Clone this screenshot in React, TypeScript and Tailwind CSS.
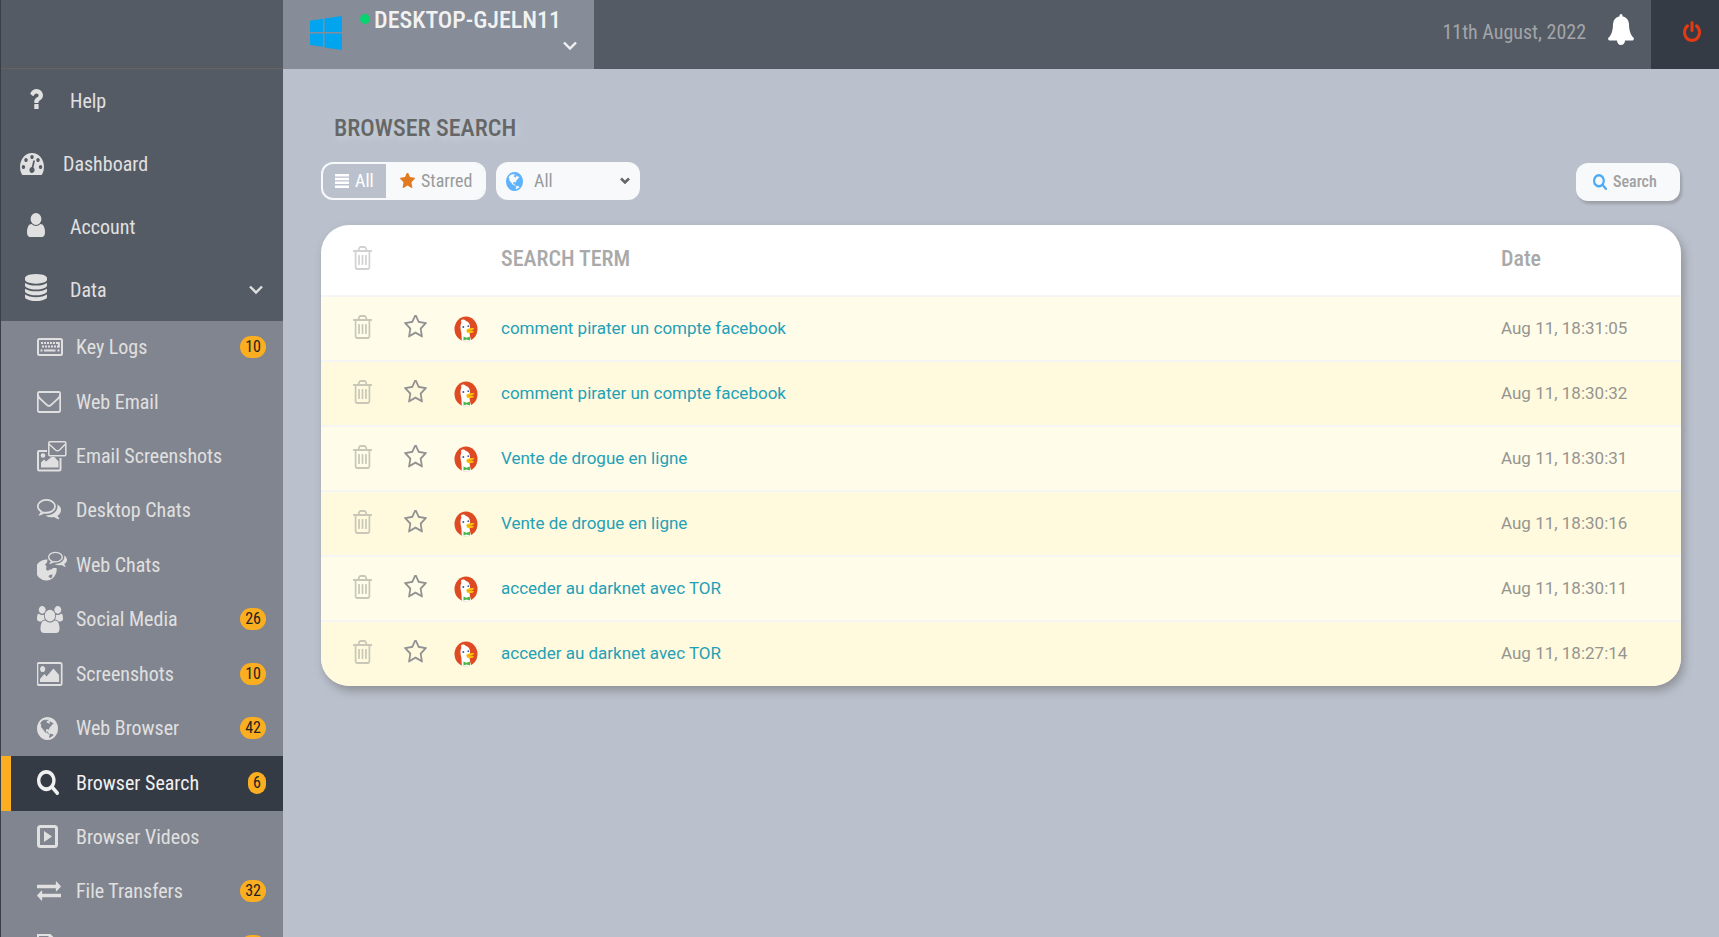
import type { ReactNode } from "react";

const TRASH =
  "M704 736v576q0 14-9 23t-23 9h-64q-14 0-23-9t-9-23v-576q0-14 9-23t23-9h64q14 0 23 9t9 23zm256 0v576q0 14-9 23t-23 9h-64q-14 0-23-9t-9-23v-576q0-14 9-23t23-9h64q14 0 23 9t9 23zm256 0v576q0 14-9 23t-23 9h-64q-14 0-23-9t-9-23v-576q0-14 9-23t23-9h64q14 0 23 9t9 23zm128 724v-948h-896v948q0 22 7 40.5t14.5 27 10.5 8.5h832q3 0 10.5-8.5t14.5-27 7-40.5zm-672-1076h448l-48-117q-7-9-17-11h-317q-10 2-17 11zm928 32v64q0 14-9 23t-23 9h-96v948q0 83-47 143.5t-113 60.5h-832q-66 0-113-58.5t-47-141.5v-952h-96q-14 0-23-9t-9-23v-64q0-14 9-23t23-9h309l70-167q15-37 54-63t79-26h320q40 0 79 26t54 63l70 167h309q14 0 23 9t9 23z";
const QUESTION =
  "M1088 1256v240q0 16-12 28t-28 12h-240q-16 0-28-12t-12-28v-240q0-16 12-28t28-12h240q16 0 28 12t12 28zm316-600q0 54-15.5 101t-35 76.5-55 59.5-57.5 43.5-61 35.5q-41 23-68.5 65t-27.5 67q0 17-12 32.5t-28 15.5h-240q-15 0-25.5-18.5t-10.5-37.5v-45q0-83 65-156.5t143-108.5q59-27 84-56t25-76q0-42-46.5-74t-107.5-32q-65 0-108 29-35 25-107 115-13 16-31 16-12 0-25-8l-164-125q-13-10-15.5-25t5.5-28q160-266 464-266 80 0 161 31t146 83 106 127.5 41 158.5z";
const DASHBOARD =
  "M384 1152q0-53-37.5-90.5t-90.5-37.5-90.5 37.5-37.5 90.5 37.5 90.5 90.5 37.5 90.5-37.5 37.5-90.5zm192-448q0-53-37.5-90.5t-90.5-37.5-90.5 37.5-37.5 90.5 37.5 90.5 90.5 37.5 90.5-37.5 37.5-90.5zm428 481l101-382q6-26-7.5-48.5t-38.5-29.5-48 6.5-30 39.5l-101 382q-60 5-107 43.5t-63 98.5q-20 77 20 146t117 89 146-20 89-117q16-60-6-117t-72-91zm660-33q0-53-37.5-90.5t-90.5-37.5-90.5 37.5-37.5 90.5 37.5 90.5 90.5 37.5 90.5-37.5 37.5-90.5zm-640-640q0-53-37.5-90.5t-90.5-37.5-90.5 37.5-37.5 90.5 37.5 90.5 90.5 37.5 90.5-37.5 37.5-90.5zm448 192q0-53-37.5-90.5t-90.5-37.5-90.5 37.5-37.5 90.5 37.5 90.5 90.5 37.5 90.5-37.5 37.5-90.5zm320 448q0 261-141 483-19 29-54 29h-1402q-35 0-54-29-141-221-141-483 0-182 71-348t191-286 286-191 348-71 348 71 286 191 191 286 71 348z";
const USER =
  "M1536 1399q0 109-62.5 187t-150.5 78h-854q-88 0-150.5-78t-62.5-187q0-85 8.5-160.5t31.5-152 58.5-131 94-89 134.5-34.5q131 128 313 128t313-128q76 0 134.5 34.5t94 89 58.5 131 31.5 152 8.5 160.5zm-256-887q0 159-112.5 271.5t-271.5 112.5-271.5-112.5-112.5-271.5 112.5-271.5 271.5-112.5 271.5 112.5 112.5 271.5z";
const DATABASE =
  "M896 768q237 0 443-43t325-127v170q0 69-103 128t-280 93.5-385 34.5-385-34.5-280-93.5-103-128v-170q119 84 325 127t443 43zm0 768q237 0 443-43t325-127v170q0 69-103 128t-280 93.5-385 34.5-385-34.5-280-93.5-103-128v-170q119 84 325 127t443 43zm0-384q237 0 443-43t325-127v170q0 69-103 128t-280 93.5-385 34.5-385-34.5-280-93.5-103-128v-170q119 84 325 127t443 43zm0-1152q208 0 385 34.5t280 93.5 103 128v128q0 69-103 128t-280 93.5-385 34.5-385-34.5-280-93.5-103-128v-128q0-69 103-128t280-93.5 385-34.5z";
const ENVELOPE =
  "M1664 1504v-768q-32 36-69 66-268 206-426 338-51 43-83 67t-86.5 48.5-102.5 24.5h-2q-48 0-102.5-24.5t-86.5-48.5-83-67q-158-132-426-338-37-30-69-66v768q0 13 9.5 22.5t22.5 9.5h1472q13 0 22.5-9.5t9.5-22.5zm0-1051v-24.5l-.5-13-3-12.5-5.5-9-9-7.5-14-2.5h-1472q-13 0-22.5 9.5t-9.5 22.5q0 168 147 284 193 152 401 317 6 5 35 29.5t46 37.5 44.5 31.5 50.5 27.5 43 9h2q20 0 43-9t50.5-27.5 44.5-31.5 46-37.5 35-29.5q208-165 401-317 54-43 100.5-115.5t46.5-131.5zm128-37v1088q0 66-47 113t-113 47h-1472q-66 0-113-47t-47-113v-1088q0-66 47-113t113-47h1472q66 0 113 47t47 113z";
const PICTURE =
  "M576 576q0 80-56 136t-136 56-136-56-56-136 56-136 136-56 136 56 56 136zm1024 384v448h-1408v-192l320-320 160 160 512-512zm96-704h-1600q-13 0-22.5 9.5t-9.5 22.5v1216q0 13 9.5 22.5t22.5 9.5h1600q13 0 22.5-9.5t9.5-22.5v-1216q0-13-9.5-22.5t-22.5-9.5zm160 32v1216q0 66-47 113t-113 47h-1600q-66 0-113-47t-47-113v-1216q0-66 47-113t113-47h1600q66 0 113 47t47 113z";
const COMMENTS =
  "M704 384q-153 0-286 52t-211.5 141-78.5 191q0 82 53 158t149 132l97 56-35 84q34-20 62-39l44-31 53 10q78 14 153 14 153 0 286-52t211.5-141 78.5-191-78.5-191-211.5-141-286-52zm0-128q191 0 353.5 68.5t256.5 186.5 94 257-94 257-256.5 186.5-353.5 68.5q-86 0-176-16-124 88-278 128-36 9-86 16h-3q-11 0-20.5-8t-11.5-21q-1-3-1-6.5t.5-6.5 2-6l2.5-5 3.5-5.5 4-5 4.5-5 4-4.5q5-6 23-25t26-29.5 22.5-29 25-38.5 20.5-44q-124-72-195-177t-71-224q0-139 94-257t256.5-186.5 353.5-68.5zm822 1169q10 24 20.5 44t25 38.5 22.5 29 26 29.5 23 25q1 1 4 4.5t4.5 5 4 5 3.5 5.5l2.5 5 2 6 .5 6.5-1 6.5q-3 14-13 22t-22 7q-50-7-86-16-154-40-278-128-90 16-176 16-271 0-472-132 58 4 88 4 161 0 309-45t264-129q125-92 192-212t67-254q0-77-23-152 129 71 204 178t75 230q0 120-71 224.5t-195 176.5z";
const USERS =
  "M593 896q-162 5-265 128h-134q-82 0-138-40.5t-56-118.5q0-353 124-353 6 0 43.5 21t97.5 42.5 119 21.5q67 0 133-23-5 37-5 66 0 139 81 256zm1071 637q0 120-73 189.5t-194 69.5h-874q-121 0-194-69.5t-73-189.5q0-53 3.5-103.5t14-109 26.5-108.5 43-97.5 62-81 85.5-53.5 111.5-20q10 0 43 21.5t73 48 107 48 135 21.5 135-21.5 107-48 73-48 43-21.5q61 0 111.5 20t85.5 53.5 62 81 43 97.5 26.5 108.5 14 109 3.5 103.5zm-1024-1277q0 106-75 181t-181 75-181-75-75-181 75-181 181-75 181 75 75 181zm704 384q0 159-112.5 271.5t-271.5 112.5-271.5-112.5-112.5-271.5 112.5-271.5 271.5-112.5 271.5 112.5 112.5 271.5zm576 225q0 78-56 118.5t-138 40.5h-134q-103-123-265-128 81-117 81-256 0-29-5-66 66 23 133 23 59 0 119-21.5t97.5-42.5 43.5-21q124 0 124 353zm-128-609q0 106-75 181t-181 75-181-75-75-181 75-181 181-75 181 75 75 181z";
const GLOBE =
  "M896 128q209 0 385.5 103t279.5 279.5 103 385.5-103 385.5-279.5 279.5-385.5 103-385.5-103-279.5-279.5-103-385.5 103-385.5 279.5-279.5 385.5-103zm274 521q-2 1-9.5 9.5t-13.5 9.5q2 0 4.5-5t5-11 3.5-7q6-7 22-15 14-6 52-12 34-8 51 11-2-2 9.5-13t14.5-12q3-2 15-4.5t15-7.5l2-22q-12 1-17.5-7t-6.5-21q0 2-6 8 0-7-4.5-8t-11.5 1-9 1q-10-3-15-7.5t-8-16.5-4-15q-2-5-9.5-11t-9.5-10q-1-2-2.5-5.5t-3-6.5-4-5.5-5.5-2.5-7 5-7.5 10-4.5 5q-3-2-6-1.5t-4.5 1-4.5 3-5 3.5q-3 2-8.5 3t-8.5 2q15-5-1-11-10-4-16-3 9-4 7.5-12t-8.5-14h5q-1-4-8.5-8.5t-17.5-8.5-13-6q-8-5-34-9.5t-33-.5q-5 6-4.5 10.5t4 14 3.5 12.5q1 6-5.5 13t-6.5 12q0 7 14 15.5t10 21.5q-3 8-16 16t-16 12q-5 8-1.5 18.5t10.5 16.5q2 2 1.5 4t-3.5 4.5-5.5 4-6.5 3.5l-3 2q-11 5-20.5-6t-13.5-26q-7-25-16-30-23-8-29 1-5-13-41-26-25-9-58-4 6-1 0-15-7-15-19-12 3-6 4-17.5t1-13.5q3-13 12-23 1-1 7-8.5t9.5-13.5.5-6q35 4 50-11 5-5 11.5-17t10.5-17q9-6 14-5.5t14.5 5.5 14.5 5q14 1 15.5-11t-7.5-20q12 1 3-17-4-7-8-9-12-4-27 5-8 4 2 8-1-1-9.5 10.5t-16.5 17.5-16-5q-1-1-5.5-13.5t-9.5-13.5q-8 0-16 15 3-8-11-15t-24-8q19-12-8-27-7-4-20.5-5t-19.5 4q-5 7-5.5 11.5t5 8 10.5 5.5 11.5 4 8.5 3q14 10 8 14-2 1-8.5 3.5t-11.5 4.5-6 4q-3 4 0 14t-2 14q-5-5-9-17.5t-7-16.5q7 9-25 6l-10-1q-4 0-16 2t-20.5 1-13.5-8q-4-8 0-20 1-4 4-2-4-3-11-9.5t-10-8.5q-46 15-94 41 6 1 12-1 5-2 13-6.5t10-5.5q34-14 42-7l5-5q14 16 20 25-7-4-30-1-20 6-22 12 7 12 5 18-4-3-11.5-10t-14.5-11-15-5q-16 0-22 1-146 80-235 222 7 7 12 8 4 1 5 9t2.5 11 11.5-3q9 8 3 19 1-1 44 27 19 17 21 21 3 11-10 18-1-2-9-9t-9-4q-3 5 .5 18.5t10.5 12.5q-7 0-9.5 16t-2.5 35.5-1 23.5l2 1q-3 12 5.5 34.5t21.5 19.5q-13 3 20 43 6 8 8 9 3 2 12 7.5t15 10 10 10.5q4 5 10 22.5t14 23.5q-2 6 9.5 20t10.5 23q-1 0-2.5 1t-2.5 1q3 7 15.5 14t15.5 13q1 3 2 10t3 11 8 2q2-20-24-62-15-25-17-29-3-5-5.5-15.5t-4.5-14.5q2 0 6 1.5t8.5 3.5 7.5 4 2 3q-3 7 2 17.5t12 18.5 17 19 12 13q6 6 14 19.5t0 13.5q9 0 20 10.5t17 19.5q5 8 8 26t5 24q2 7 8.5 13.5t12.5 9.5l16 8 13 7q5 2 18.5 10.5t21.5 11.5q10 4 16 4t14.5-2.5 13.5-3.5q15-2 29 15t21 21q36 19 55 11-2 1 .5 7.5t8 15.5 9 14.5 5.5 8.5q5 6 18 15t18 15q6-4 7-9-3 8 7 20t18 10q14-3 14-32-31 15-49-18 0-1-2.5-5.5t-4-8.5-2.5-8.5 0-7.5 5-3q9 0 10-3.5t-2-12.5-4-13q-1-8-11-20t-12-15q-5 9-16 8t-16-9q0 1-1.5 5.5t-1.5 6.5q-13 0-15-1 1-3 2.5-17.5t3.5-22.5q1-4 5.5-12t7.5-14.5 4-12.5-4.5-9.5-17.5-2.5q-19 1-26 20-1 3-3 10.5t-5 11.5-9 7q-7 3-24 2t-24-5q-13-8-22.5-29t-9.5-37q0-10 2.5-26.5t3-25-5.5-24.5q3-2 9-9.5t10-10.5q2-1 4.5-1.5t4.5 0 4-1.5 3-6q-1-1-4-3-3-3-4-3 7 3 28.5-1.5t27.5 1.5q15 11 22-2 0-1-2.5-9.5t-.5-13.5q5 27 29 9 3 3 15.5 5t17.5 5q3 2 7 5.5t5.5 4.5 5-.5 8.5-6.5q10 14 12 24 11 40 19 44 7 3 11 2t4.5-9.5 0-14-1.5-12.5l-1-8v-18l-1-8q-15-3-18.5-12t1.5-18.5 15-18.5q1-1 8-3.5t15.5-6.5 12.5-8q21-19 15-35 7 0 11-9-1 0-5-3t-7.5-5-4.5-2q9-5 2-16 5-3 7.5-11t7.5-10q9 12 21 2 8-8 1-16 5-7 20.5-10.5t18.5-9.5q7 2 8-2t1-12 3-12q4-5 15-9t13-5l17-11q3-4 0-4 18 2 31-11 10-11-6-20 3-6-3-9.5t-15-5.5q3-1 11.5-.5t10.5-1.5q15-10-7-16-17-5-43 12zm-163 877q206-36 351-189-3-3-12.5-4.5t-12.5-3.5q-18-7-24-8 1-7-2.5-13t-8-9-12.5-8-11-7q-2-2-7-6t-7-5.5-7.5-4.5-8.5-2-10 1l-3 1q-3 1-5.5 2.5t-5.5 3-4 3 0 2.5q-21-17-36-22-5-1-11-5.5t-10.5-7-10-1.5-11.5 7q-5 5-6 15t-2 13q-7-5 0-17.5t2-18.5q-3-6-10.5-4.5t-12 4.5-11.5 8.5-9 6.5-8.5 5.5-8.5 7.5q-3 4-6 12t-5 11q-2-4-11.5-6.5t-9.5-5.5q2 10 4 35t5 38q7 31-12 48-27 25-29 40-4 22 12 26 0 7-8 20.5t-7 21.5q0 6 2 16z";
const SEARCH =
  "M1216 832q0-185-131.5-316.5t-316.5-131.5-316.5 131.5-131.5 316.5 131.5 316.5 316.5 131.5 316.5-131.5 131.5-316.5zm512 832q0 52-38 90t-90 38q-54 0-90-38l-343-342q-179 124-399 124-143 0-273.5-55.5t-225-150-150-225-55.5-273.5 55.5-273.5 150-225 225-150 273.5-55.5 273.5 55.5 225 150 150 225 55.5 273.5q0 220-124 399l343 343q37 37 37 90z";
const EXCHANGE =
  "M1792 1184v192q0 13-9.5 22.5t-22.5 9.5h-1376v192q0 13-9.5 22.5t-22.5 9.5q-12 0-24-10l-319-320q-9-9-9-22 0-14 9-23l320-320q9-9 23-9 13 0 22.5 9.5t9.5 22.5v192h1376q13 0 22.5 9.5t9.5 22.5zm0-544q0 14-9 23l-320 320q-9 9-23 9-13 0-22.5-9.5t-9.5-22.5v-192h-1376q-13 0-22.5-9.5t-9.5-22.5v-192q0-13 9.5-22.5t22.5-9.5h1376v-192q0-14 9-23t23-9q12 0 24 10l319 319q9 9 9 23z";
const BELL =
  "M1728 1408q0 52-38 90t-90 38h-448q0 106-75 181t-181 75-181-75-75-181h-448q-52 0-90-38t-38-90q50-42 91-88t85-119.5 74.5-158.5 50-206 19.5-260q0-152 117-282.5t307-158.5q-8-19-8-39 0-40 28-68t68-28 68 28 28 68q0 20-8 39 190 28 307 158.5t117 282.5q0 139 19.5 260t50 206 74.5 158.5 85 119.5 91 88z";
const POWER =
  "M1664 896q0 156-61 298t-164 245-245 164-298 61-298-61-245-164-164-245-61-298q0-182 80.5-343t226.5-270q43-32 95.5-25t83.5 50q32 42 24.5 94.5t-49.5 84.5q-98 74-151.5 181t-53.5 228q0 104 40.5 198.5t109.5 163.5 163.5 109.5 198.5 40.5 198.5-40.5 163.5-109.5 109.5-163.5 40.5-198.5q0-121-53.5-228t-151.5-181q-42-32-49.5-84.5t24.5-94.5q31-43 84-50t95 25q146 109 226.5 270t80.5 343zm-640-768v640q0 52-38 90t-90 38-90-38-38-90v-640q0-52 38-90t90-38 90 38 38 90z";
const STAR =
  "M1728 647q0 22-26 48l-363 354 86 500q1 7 1 20 0 21-10.5 35.5t-30.5 14.5q-19 0-40-12l-449-236-449 236q-22 12-40 12-21 0-31.5-14.5t-10.5-35.5q0-6 2-20l86-500-364-354q-25-27-25-48 0-37 56-46l502-73 225-455q19-41 49-41t49 41l225 455 502 73q56 9 56 46z";
const STAR_OUTLINE =
  "M1201 1004l306-297-422-62-189-382-189 382-422 62 306 297-73 421 378-199 377 199zm527-357q0 22-26 48l-363 354 86 500q1 7 1 20 0 50-41 50-19 0-40-12l-449-236-449 236q-22 12-40 12-21 0-31.5-14.5t-10.5-35.5q0-6 2-20l86-500-364-354q-25-27-25-48 0-37 56-46l502-73 225-455q19-41 49-41t49 41l225 455 502 73q56 9 56 46z";

type GlyphProps = { d: string; className: string; box?: string };

function Glyph({ d, className, box = "0 0 1792 1792" }: GlyphProps) {
  return (
    <svg
      viewBox={box}
      preserveAspectRatio="none"
      fill="currentColor"
      aria-hidden="true"
      className={`shrink-0 ${className}`}
    >
      <path d={d} />
    </svg>
  );
}

function Keyboard() {
  const keys = [5, 8, 11, 14, 17, 20];
  return (
    <svg viewBox="0 0 26 18" className="h-[18px] w-[26px]" fill="currentColor" aria-hidden="true">
      <rect x="1" y="1" width="24" height="16" rx="1.5" fill="none" stroke="currentColor" strokeWidth="2" />
      {keys.map((x) => (
        <g key={x}>
          <rect x={x - 1} y="4" width="2" height="2" />
          <rect x={x} y="7.5" width="2" height="2" />
        </g>
      ))}
      <rect x="3.5" y="11.5" width="2" height="2" />
      <rect x="7" y="11.5" width="11.5" height="2" />
      <rect x="20.5" y="11.5" width="2" height="2" />
      <path d="M21 4h1.8v5.500h-2.500v-1.500h.7z" />
    </svg>
  );
}

function EmailScreenshots() {
  return (
    <svg viewBox="0 0 30 32" className="h-8 w-[30px]" fill="currentColor" aria-hidden="true">
      <path
        d="M10 11H2.200Q1 11 1 12.200V29Q1 30.500 2.200 30.500H22Q23.500 30.500 23.500 29V18"
        fill="none"
        stroke="currentColor"
        strokeWidth="2"
      />
      <circle cx="6" cy="15.500" r="2.300" />
      <path d="M4 27.500v-5l3-3 2 2L14.500 17h3l4 4.500v6z" />
      <rect x="11.800" y="1.800" width="17" height="14" rx="1" fill="none" stroke="currentColor" strokeWidth="1.500" />
      <path d="M12 4l6.500 6q2 1.600 4 0L28.500 4" fill="none" stroke="currentColor" strokeWidth="1.500" />
    </svg>
  );
}

function WebChats() {
  return (
    <svg viewBox="0 0 30 32" className="h-8 w-[30px]" fill="currentColor" aria-hidden="true">
      <path d="M10.500 10.500A10.500 10.500 0 1 0 19.500 19l-3.500 0-1.500 1.500-2 0-1.500 1.500-2-1.500.5-3-1.500-2 2-2z" />
      <path d="M12.500 26l3-.5-.5 3-2 .5-1.500-1.500z" fill="#81858f" />
      <svg x="11" y="0" width="19" height="19" viewBox="0 0 1792 1792">
        <path d={COMMENTS} />
      </svg>
    </svg>
  );
}

function VideoBox() {
  return (
    <svg viewBox="0 0 21 23" className="h-[23px] w-[21px]" fill="currentColor" aria-hidden="true">
      <rect x="1.500" y="1.500" width="18" height="20" rx="2" fill="none" stroke="currentColor" strokeWidth="3" />
      <path d="M7 6l8 5.500L7 17z" />
    </svg>
  );
}

function FileIcon() {
  return (
    <svg viewBox="0 0 20 24" className="h-6 w-5" fill="none" stroke="currentColor" strokeWidth="2" aria-hidden="true">
      <path d="M1 1h12l6 6v16H1zM12.500 1v7H19" />
    </svg>
  );
}

function Chevron({ className }: { className: string }) {
  return (
    <svg viewBox="0 0 14 10" className={className} fill="none" stroke="currentColor" aria-hidden="true">
      <path d="M1 1.500l6 6 6-6" strokeWidth="2.400" />
    </svg>
  );
}

function WindowsLogo() {
  return (
    <svg viewBox="0 0 32 34" className="mt-4 h-[34px] w-8 shrink-0" fill="#00a4ef" aria-hidden="true">
      <path d="M0 4.800L13 2.800V16H0zM14.500 2.600L32 0v16H14.500zM0 17.500h13v13.300L0 29zM14.500 17.500H32V34l-17.500-2.600z" />
    </svg>
  );
}

function Duck() {
  return (
    <svg viewBox="0 0 24 26" className="h-[26px] w-6" role="img" aria-label="DuckDuckGo">
      <ellipse cx="12" cy="13" rx="11.500" ry="12.500" fill="#de4a22" />
      <path
        d="M7 4.500C8 2.800 11 3.200 12 5c2.800 1 4.200 3 4 6.500l-.6 5 .8 4.500 1 3.800q-5 1.800-9.400 0L7.400 17C6.200 12 6 9 7.400 7z"
        fill="#fff"
      />
      <circle cx="9.300" cy="11" r="1" fill="#3a5ea0" />
      <circle cx="14.300" cy="10.200" r=".9" fill="#3a5ea0" />
      <path d="M12.500 13.500q4-2 8-1.300-.5 1.600-3.500 2.200 2.600.4 3 1.300-1 1.600-6.500 1.300-1.600-1.800-1-3.500z" fill="#fcc30b" />
      <path d="M13 14.900l5.500-.3" stroke="#d98a10" strokeWidth=".7" />
      <path d="M9.500 20.500l3 1.200 3.500-1.200v4l-3.500-1-3 1z" fill="#4cb848" />
    </svg>
  );
}

type DataItem = { label: string; icon: ReactNode; count?: number; active?: boolean };

const dataItems: DataItem[] = [
  { label: "Key Logs", icon: <Keyboard />, count: 10 },
  { label: "Web Email", icon: <Glyph d={ENVELOPE} box="0 256 1792 1408" className="h-[22px] w-6" /> },
  { label: "Email Screenshots", icon: <EmailScreenshots /> },
  { label: "Desktop Chats", icon: <Glyph d={COMMENTS} box="0 256 1792 1536" className="h-[22px] w-6" /> },
  { label: "Web Chats", icon: <WebChats /> },
  { label: "Social Media", icon: <Glyph d={USERS} box="0 0 1920 1792" className="h-[27px] w-[26px]" />, count: 26 },
  { label: "Screenshots", icon: <Glyph d={PICTURE} box="-32 128 1920 1536" className="h-6 w-[26px]" />, count: 10 },
  { label: "Web Browser", icon: <Glyph d={GLOBE} box="128 128 1536 1536" className="h-[23px] w-[21px]" />, count: 42 },
  {
    label: "Browser Search",
    icon: <Glyph d={SEARCH} box="64 128 1664 1664" className="h-[25px] w-[22px]" />,
    count: 6,
    active: true,
  },
  { label: "Browser Videos", icon: <VideoBox /> },
  { label: "File Transfers", icon: <Glyph d={EXCHANGE} box="0 256 1792 1408" className="h-5 w-6" />, count: 32 },
  { label: "File Activity", icon: <FileIcon />, count: 28 },
];

const rows = [
  ["comment pirater un compte facebook", "Aug 11, 18:31:05"],
  ["comment pirater un compte facebook", "Aug 11, 18:30:32"],
  ["Vente de drogue en ligne", "Aug 11, 18:30:31"],
  ["Vente de drogue en ligne", "Aug 11, 18:30:16"],
  ["acceder au darknet avec TOR", "Aug 11, 18:30:11"],
  ["acceder au darknet avec TOR", "Aug 11, 18:27:14"],
];

function Sidebar() {
  const link = "flex h-[63px] items-center";
  return (
    <nav className="flex h-full w-[283px] shrink-0 flex-col overflow-hidden border-l border-[#3a3f47] bg-[#555b65] text-xl text-[#e0e0e0]">
      <div className="h-[69px] shrink-0 border-b border-[#66645c]" />
      <ul className="shrink-0">
        <li>
          <a href="#help" className={`${link} gap-[22px] pl-[23px]`}>
            <span className="flex w-6 justify-center pb-1">
              <Glyph d={QUESTION} box="384 256 1024 1280" className="h-5 w-[14px]" />
            </span>
            Help
          </a>
        </li>
        <li>
          <a href="#dashboard" className={`${link} gap-[19px] pl-[19px]`}>
            <Glyph d={DASHBOARD} box="0 256 1792 1408" className="h-[22px] w-6" />
            Dashboard
          </a>
        </li>
        <li>
          <a href="#account" className={`${link} gap-[22px] pl-[23px]`}>
            <span className="flex w-6 justify-center pb-1">
              <Glyph d={USER} box="256 128 1280 1536" className="h-6 w-[18px]" />
            </span>
            Account
          </a>
        </li>
        <li>
          <button type="button" aria-expanded="true" className={`${link} w-full gap-[22px] pr-5 pl-[23px]`}>
            <span className="flex w-6 justify-center pb-1">
              <Glyph d={DATABASE} box="128 0 1536 1792" className="h-[27px] w-[22px]" />
            </span>
            <span className="flex-1 text-left">Data</span>
            <Chevron className="h-[10px] w-[14px]" />
          </button>
        </li>
      </ul>
      <ul className="grid h-[653px] shrink-0 auto-rows-fr bg-[#81858f]">
        {dataItems.map(({ label, icon, count, active }) => (
          <li key={label} className="min-h-0">
            <a
              href={`#${label.toLowerCase().replace(" ", "-")}`}
              aria-current={active ? "page" : undefined}
              className={`flex h-full items-center border-l-10 pr-[17px] pb-[2px] pl-[26px] ${
                active ? "border-[#fbae1f] bg-[#353b45] text-[#f0f0f0]" : "border-transparent"
              }`}
            >
              <span className="flex w-[39px] shrink-0">{icon}</span>
              <span className="flex-1 whitespace-nowrap">{label}</span>
              {count !== undefined && (
                <span className="rounded-full bg-[#fbae1f] px-[5px] text-base leading-[22px] text-[#222]">{count}</span>
              )}
            </a>
          </li>
        ))}
      </ul>
    </nav>
  );
}

function TopBar() {
  return (
    <header className="flex h-[69px] shrink-0 bg-[#555b65]">
      <button type="button" className="flex w-[311px] bg-[#868c98] pl-[27px] text-left">
        <WindowsLogo />
        <span className="mt-[14px] ml-[18px] size-[10px] rounded-full bg-[#06d36f]" />
        <span className="ml-1 flex h-full flex-1 flex-col pt-[6px] text-2xl leading-7 font-medium text-[#f2f2f2]">
          DESKTOP-GJELN11
          <Chevron className="mt-[7px] mr-[17px] h-[10px] w-[14px] self-end" />
        </span>
      </button>
      <div className="flex flex-1 items-center justify-end pb-[6px]">
        <time dateTime="2022-08-11" className="text-xl text-[#a3a5a8]">
          11th August, 2022
        </time>
        <button type="button" aria-label="Notifications" className="mr-[17px] mb-1 ml-[22px] text-white">
          <Glyph d={BELL} box="64 0 1664 1792" className="h-[31px] w-[26px]" />
        </button>
      </div>
      <button
        type="button"
        aria-label="Log out"
        className="flex w-[68px] items-center justify-center bg-[#353b45] pb-[6px] pl-[14px] text-[#e23a12]"
      >
        <Glyph d={POWER} box="128 0 1536 1664" className="h-[21px] w-[18px]" />
      </button>
    </header>
  );
}

function Toolbar() {
  return (
    <div className="mt-[18px] flex items-start">
      <div className="flex h-[38px] rounded-xl border-2 border-[#f7f9fb] text-lg">
        <button type="button" aria-pressed="true" className="flex w-[63px] items-center gap-[6px] pl-3 text-white">
          <svg viewBox="0 0 14 14" className="h-[14px] w-[14px]" fill="currentColor" aria-hidden="true">
            <path d="M0 0h14v2.500H0zM0 3.800h14v2.500H0zM0 7.600h14v2.500H0zM0 11.400h14v2.500H0z" />
          </svg>
          All
        </button>
        <button
          type="button"
          aria-pressed="false"
          className="flex w-[98px] items-center gap-[6px] rounded-r-[9px] bg-[#f7f9fb] pl-[14px] text-[#9a9a9a]"
        >
          <Glyph d={STAR} box="64 128 1664 1587" className="h-4 w-[15px] text-[#e27a22]" />
          Starred
        </button>
      </div>
      <label className="ml-[10px] flex h-[38px] w-[144px] items-center rounded-xl bg-[#f7f9fb] px-[10px] text-lg text-[#9a9a9a]">
        <Glyph d={GLOBE} box="128 128 1536 1536" className="h-[19px] w-[17px] text-[#5eb2fb]" />
        <select aria-label="Browser" className="ml-[11px] flex-1 appearance-none bg-transparent outline-none">
          <option>All</option>
        </select>
        <svg viewBox="0 0 10 8" className="h-2 w-[10px]" fill="none" stroke="#666" strokeWidth="2.600" aria-hidden="true">
          <path d="M1 1.500l4 4 4-4" />
        </svg>
      </label>
      <button
        type="button"
        className="mt-px mr-px ml-auto flex h-[38px] w-[104px] items-center gap-[6px] rounded-xl bg-[#f7f9fb] pl-[17px] font-medium text-[#a0a0a0] shadow-[2px_3px_3px_#9c9fa6]"
      >
        <Glyph d={SEARCH} box="64 128 1664 1664" className="h-4 w-[14px] text-[#4dabf5]" />
        Search
      </button>
    </div>
  );
}

function SearchTable() {
  const trash = <Glyph d={TRASH} box="192 128 1408 1536" className="h-6 w-[19px]" />;
  return (
    <div className="mt-6 overflow-hidden rounded-[28px] bg-white shadow-[3px_5px_10px_#8f9196]">
      <table className="w-full table-fixed border-collapse font-['Roboto',sans-serif] text-[17px]">
        <colgroup>
          <col className="w-[70px]" />
          <col className="w-[50px]" />
          <col className="w-[60px]" />
          <col />
          <col className="w-[180px]" />
        </colgroup>
        <thead>
          <tr className="h-[71px] text-left font-['Roboto_Condensed',sans-serif] text-[22px] text-[#a9a9a9]">
            <th className="pb-1 pl-8">
              <button type="button" aria-label="Delete all" className="flex text-[#d2d2d2]">
                {trash}
              </button>
            </th>
            <td />
            <td />
            <th className="pb-1 pl-0 font-medium">SEARCH TERM</th>
            <th className="pb-1 pl-0 font-medium">Date</th>
          </tr>
        </thead>
        <tbody>
          {rows.map(([term, date]) => (
            <tr key={date} className="h-[65px] border-t-2 border-[#f5f6f4] odd:bg-[#fffce9] even:bg-[#fffade]">
              <td className="pb-1 pl-8">
                <button type="button" aria-label="Delete" className="flex text-[#c9c8b8]">
                  {trash}
                </button>
              </td>
              <td className="pb-1">
                <button type="button" aria-label="Star" className="ml-[13px] flex text-[#929292]">
                  <Glyph d={STAR_OUTLINE} box="64 128 1664 1587" className="h-6 w-[23px]" />
                </button>
              </td>
              <td className="pl-[13px]">
                <Duck />
              </td>
              <td>
                <a href="#term" className="text-[#24a0b6]">
                  {term}
                </a>
              </td>
              <td className="text-[#959590]">{date}</td>
            </tr>
          ))}
        </tbody>
      </table>
    </div>
  );
}

export default function App() {
  return (
    <div className="flex h-screen overflow-hidden bg-[#bac1cd] font-['Roboto_Condensed',sans-serif]">
      <Sidebar />
      <div className="flex min-w-0 flex-1 flex-col">
        <TopBar />
        <main className="flex-1 overflow-hidden px-[38px] pt-[43px]">
          <h1 className="pl-[13px] text-2xl leading-8 font-medium text-[#666] [text-shadow:2px_3px_6px_#c8d2da]">
            BROWSER SEARCH
          </h1>
          <Toolbar />
          <SearchTable />
        </main>
      </div>
    </div>
  );
}
